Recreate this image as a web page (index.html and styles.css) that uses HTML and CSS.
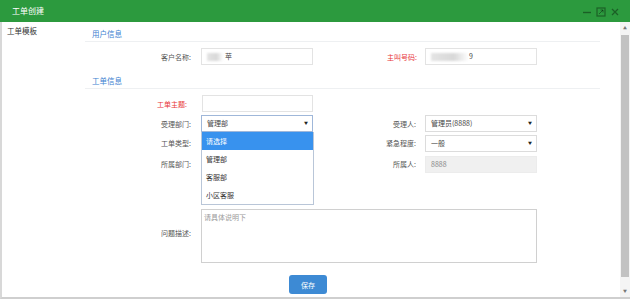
FILE: index.html
```html
<!DOCTYPE html>
<html lang="zh-CN">
<head>
<meta charset="utf-8">
<title>工单创建</title>
<link rel="stylesheet" href="styles.css">
</head>
<body>
<div class="window">
  <header class="titlebar">
    <span class="title">工单创建</span>
    <div class="controls">
      <svg class="ctl" width="10" height="10" viewBox="0 0 10 10"><path d="M1 5.5h8" stroke="currentColor" stroke-width="1.4"/></svg>
      <svg class="ctl" width="10" height="10" viewBox="0 0 10 10"><rect x="1" y="1" width="8" height="8" fill="none" stroke="currentColor" stroke-width="1.2"/><path d="M3 7L7 3M4.5 3H7V5.5" fill="none" stroke="currentColor" stroke-width="1"/></svg>
      <svg class="ctl" width="10" height="10" viewBox="0 0 10 10"><path d="M2 2L8 8M8 2L2 8" stroke="currentColor" stroke-width="1.3"/></svg>
    </div>
  </header>
  <div class="body">
    <aside class="sidebar">工单模板</aside>
    <main class="content">
      <h2 class="section-title">用户信息</h2>
      <div class="form-grid grid-user">
        <label class="label">客户名称:</label>
        <div class="input"><span class="blur blur-short"></span>苹</div>
        <label class="label label-right required">主叫号码:</label>
        <div class="input"><span class="blur blur-long"></span>9</div>
      </div>

      <h2 class="section-title">工单信息</h2>
      <div class="form-grid grid-order">
        <label class="label required">工单主题:</label>
        <div class="input input-subject"></div>
        <div class="spacer"></div>
        <div class="spacer"></div>

        <label class="label">受理部门:</label>
        <div class="select select-open">管理部<span class="arrow">▼</span>
          <ul class="dropdown">
            <li class="option active">请选择</li>
            <li class="option">管理部</li>
            <li class="option">客服部</li>
            <li class="option">小区客服</li>
          </ul>
        </div>
        <label class="label label-right">受理人:</label>
        <div class="select">管理员(8888)<span class="arrow">▼</span></div>

        <label class="label">工单类型:</label>
        <div class="spacer"></div>
        <label class="label label-right">紧急程度:</label>
        <div class="select">一般<span class="arrow">▼</span></div>

        <label class="label">所属部门:</label>
        <div class="spacer"></div>
        <label class="label label-right">所属人:</label>
        <div class="input input-disabled row-end">8888</div>

        <label class="label label-desc">问题描述:</label>
        <div class="textarea"><span class="placeholder">请具体说明下</span></div>

        <div class="actions"><button class="btn-save">保存</button></div>
      </div>
    </main>
    <div class="scrollbar">
      <span class="sb-arrow">▲</span>
      <div class="sb-thumb"></div>
      <span class="sb-arrow">▼</span>
    </div>
  </div>
</div>
</body>
</html>
```

FILE: styles.css
```css
* { box-sizing: border-box; }
html, body { margin: 0; padding: 0; }
body {
  width: 630px;
  height: 299px;
  overflow: hidden;
  background: #fff;
  font-family: "Noto Sans CJK SC", "Noto Sans", sans-serif;
  color: #555;
  font-size: 7px;
}
.window {
  width: 630px;
  height: 299px;
  display: flex;
  flex-direction: column;
}
.titlebar {
  height: 22px;
  flex: none;
  background: #2c9a3e;
  display: flex;
  align-items: center;
  justify-content: space-between;
  padding: 0 10px 0 12px;
}
.title {
  color: #fff;
  font-size: 8px;
  line-height: 10px;
}
.controls {
  display: flex;
  gap: 4px;
  color: rgba(0, 0, 0, 0.38);
  padding-top: 1px;
}
.ctl { display: block; }
.body {
  flex: 1;
  display: flex;
  border-left: 2px solid #d8d8d8;
  border-bottom: 2px solid #cfcfcf;
  min-height: 0;
}
.sidebar {
  width: 83px;
  flex: none;
  padding: 4px 0 0 5px;
  font-size: 7.5px;
  line-height: 10px;
  color: #333;
}
.content {
  flex: 1;
  padding-right: 20px;
}
.section-title {
  margin: 0;
  font-weight: normal;
  font-size: 7.5px;
  line-height: 12px;
  padding: 6px 0 1px 7px;
  color: #3d7fd0;
  border-bottom: 1px solid #eef0f2;
}
.form-grid {
  display: grid;
  grid-template-columns: 116px 112px 112px 112px;
  align-items: center;
}
.grid-user {
  margin: 6px 0 4px;
  grid-template-rows: 17px;
}
.grid-order {
  margin-top: 6px;
  grid-template-rows: 17px 17px 16px 19px 30px 54px 28px;
  row-gap: 3px;
}
.label {
  text-align: right;
  padding-right: 10px;
  white-space: nowrap;
  line-height: 10px;
}
.label-right { padding-right: 9px; }
.required { color: #e8353a; padding-right: 14px; }
.label-right.required { padding-right: 8px; }
.input, .select {
  height: 17px;
  border: 1px solid #e3e3e3;
  background: #fff;
  padding: 0 5px;
  line-height: 15px;
  color: #444;
  display: flex;
  align-items: center;
  position: relative;
}
.input-subject { margin-left: 1px; }
.blur {
  display: inline-block;
  height: 8px;
  background: linear-gradient(90deg, #e4e4e4, #d8d8d8 60%, rgba(230,230,230,0));
  filter: blur(1px);
  margin-right: 2px;
}
.blur-short { width: 16px; }
.blur-long { width: 38px; margin-left: 0; margin-right: 0; }
.select { border-color: #dcdcdc; }
.arrow {
  position: absolute;
  right: 4px;
  top: 0;
  font-size: 4px;
  line-height: 15px;
  color: #222;
}
.select-open { border-color: #9fb7d9; }
.dropdown {
  position: absolute;
  left: -1px;
  top: 16px;
  width: 113px;
  margin: 0;
  padding: 0;
  list-style: none;
  background: #fff;
  border: 1px solid #b9c6d8;
  border-top: none;
  z-index: 5;
}
.option {
  height: 18px;
  line-height: 18px;
  padding-left: 4px;
  color: #333;
}
.option.active {
  background: #3892ee;
  color: #fff;
}
.input-disabled {
  background: #f0f0f0;
  border-color: #ececec;
  color: #888;
}
.row-end { align-self: end; }
.label-desc { grid-row: 6; grid-column: 1; margin-top: -6px; }
.textarea {
  grid-row: 6;
  grid-column: 2 / 5;
  height: 54px;
  width: 336px;
  border: 1px solid #d0d0d0;
  padding: 2px 2px;
  align-self: stretch;
}
.placeholder { color: #9a9a9a; line-height: 10px; }
.actions {
  grid-row: 7;
  grid-column: 2 / 5;
  align-self: end;
  padding-left: 88px;
  height: 19px;
}
.btn-save {
  display: block;
  width: 38px;
  height: 19px;
  border: none;
  border-radius: 3px;
  background: #3d8ad4;
  color: #fff;
  font-family: inherit;
  font-size: 7px;
  padding: 0;
}
.scrollbar {
  width: 10px;
  flex: none;
  display: flex;
  flex-direction: column;
  align-items: center;
  background: #f4f4f4;
  padding: 0 1px;
}
.sb-arrow {
  height: 12px;
  font-size: 4px;
  line-height: 12px;
  color: #777;
  flex: none;
}
.sb-thumb {
  flex: 1;
  width: 8px;
  background: #c2c2c2;
  margin: 1px 0 8px;
}
```
